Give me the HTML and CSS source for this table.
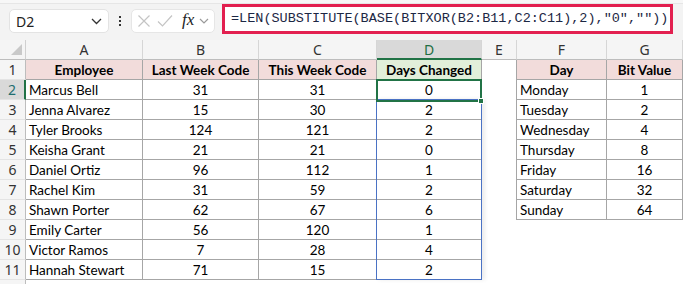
FILE: index.html
```html
<!DOCTYPE html>
<html>
<head>
<meta charset="utf-8">
<link rel="stylesheet" href="styles.css">
</head>
<body>
<div class="app">
  <div class="toolbar">
    <div class="namebox">
      <span class="ref">D2</span>
      <svg class="chev" width="11" height="7" viewBox="0 0 11 7"><polyline points="1,1 5.5,5.5 10,1" fill="none" stroke="#333" stroke-width="1.3"/></svg>
    </div>
    <div class="dots"><i></i><i></i><i></i></div>
    <div class="fnbox">
      <svg class="ico" width="14" height="14" viewBox="0 0 14 14"><path d="M1.5 1.5 L12.5 12.5 M12.5 1.5 L1.5 12.5" stroke="#c4c4c4" stroke-width="1.2" fill="none"/></svg>
      <svg class="ico" width="16" height="14" viewBox="0 0 16 14"><polyline points="1,7.5 5.5,12 15,1.5" fill="none" stroke="#c4c4c4" stroke-width="1.2"/></svg>
      <span class="fx">fx</span>
      <svg class="chev2" width="10" height="6" viewBox="0 0 10 6"><polyline points="1,1 5,5 9,1" fill="none" stroke="#9a9a9a" stroke-width="1.2"/></svg>
    </div>
    <div class="formula">=LEN(SUBSTITUTE(BASE(BITXOR(B2:B11,C2:C11),2),"0",""))</div>
  </div>
  <div class="sheet">
    <div class="corner"><span class="tri"></span></div>
    <div class="ch">A</div><div class="ch">B</div><div class="ch">C</div><div class="ch ch-sel">D</div><div class="ch">E</div><div class="ch">F</div><div class="ch">G</div>

    <div class="rh">1</div>
    <div class="c hd">Employee</div><div class="c hd">Last Week Code</div><div class="c hd">This Week Code</div><div class="c hd hd-g">Days Changed</div><div class="e eb"></div><div class="c hd">Day</div><div class="c hd">Bit Value</div>

    <div class="rh rh-sel">2</div>
    <div class="c t">Marcus Bell</div><div class="c">31</div><div class="c">31</div><div class="c">0</div><div class="e eb"></div><div class="c t">Monday</div><div class="c">1</div>

    <div class="rh">3</div>
    <div class="c t">Jenna Alvarez</div><div class="c">15</div><div class="c">30</div><div class="c">2</div><div class="e eb"></div><div class="c t">Tuesday</div><div class="c">2</div>

    <div class="rh">4</div>
    <div class="c t">Tyler Brooks</div><div class="c">124</div><div class="c">121</div><div class="c">2</div><div class="e eb"></div><div class="c t">Wednesday</div><div class="c">4</div>

    <div class="rh">5</div>
    <div class="c t">Keisha Grant</div><div class="c">21</div><div class="c">21</div><div class="c">0</div><div class="e eb"></div><div class="c t">Thursday</div><div class="c">8</div>

    <div class="rh">6</div>
    <div class="c t">Daniel Ortiz</div><div class="c">96</div><div class="c">112</div><div class="c">1</div><div class="e eb"></div><div class="c t">Friday</div><div class="c">16</div>

    <div class="rh">7</div>
    <div class="c t">Rachel Kim</div><div class="c">31</div><div class="c">59</div><div class="c">2</div><div class="e eb"></div><div class="c t">Saturday</div><div class="c">32</div>

    <div class="rh">8</div>
    <div class="c t">Shawn Porter</div><div class="c">62</div><div class="c">67</div><div class="c">6</div><div class="e eb"></div><div class="c t">Sunday</div><div class="c">64</div>

    <div class="rh">9</div>
    <div class="c t">Emily Carter</div><div class="c">56</div><div class="c">120</div><div class="c">1</div><div class="e"></div><div class="e"></div><div class="e"></div>

    <div class="rh">10</div>
    <div class="c t">Victor Ramos</div><div class="c">7</div><div class="c">28</div><div class="c">4</div><div class="e"></div><div class="e"></div><div class="e"></div>

    <div class="rh">11</div>
    <div class="c t">Hannah Stewart</div><div class="c">71</div><div class="c">15</div><div class="c">2</div><div class="e"></div><div class="e"></div><div class="e"></div>

    <div class="spill"></div>
    <div class="active"><span class="handle"></span></div>
  </div>
  <div class="tail"><div class="rh-tail"></div></div>
</div>
</body>
</html>
```

FILE: styles.css
```css
* { box-sizing: border-box; }
html, body { margin: 0; padding: 0; }
body { width: 683px; height: 284px; overflow: hidden; background: #fff; }

.app { width: 683px; height: 284px; overflow: hidden; }

.toolbar {
  height: 40px;
  background: #f3f3f3;
  border-top: 3px solid #f7f7f7;
  box-shadow: inset 0 1px 0 #e6e6e6;
  display: flex;
  align-items: flex-start;
  position: relative;
}

.namebox {
  margin: 6px 0 0 9px;
  width: 100px;
  height: 24px;
  background: #fff;
  border: 1px solid #e3e3e3;
  border-radius: 5px;
  display: flex;
  align-items: center;
  justify-content: space-between;
  padding: 0 6px 0 6px;
}
.ref { font-family: "Noto Sans", sans-serif; font-size: 14px; color: #222; }
.chev { margin-top: 1px; }

.dots {
  width: 22px;
  height: 24px;
  margin-top: 6px;
  display: flex;
  flex-direction: column;
  align-items: center;
  justify-content: center;
  gap: 2px;
}
.dots i { display: block; width: 2px; height: 2px; background: #333; }

.fnbox {
  margin-top: 6px;
  width: 84px;
  height: 24px;
  background: #fff;
  border: 1px solid #e6e6e6;
  border-radius: 5px;
  display: flex;
  align-items: center;
  padding-left: 5px;
  gap: 6px;
}
.fx {
  font-family: "Liberation Serif", serif;
  font-style: italic;
  font-size: 17px;
  color: #222;
  margin-left: 3px;
  margin-top: -2px;
}
.chev2 { margin-left: -1px; }

.formula {
  margin: 1px 0 0 7px;
  width: 451px;
  height: 30px;
  background: #fff;
  border: 3px solid #e21f4f;
  font-family: "Liberation Mono", monospace;
  font-size: 13.5px;
  line-height: 24px;
  color: #1c2744;
  padding-left: 6px;
  white-space: nowrap;
  overflow: hidden;
}

.sheet {
  position: relative;
  display: grid;
  grid-template-columns: 26px 117px 116px 118px 105px 35px 90px 76px;
  grid-template-rows: repeat(12, 20px);
  font-family: "Lato", sans-serif;
  font-size: 13.5px;
  color: #000;
}

.tail { height: 4px; display: flex; }
.rh-tail { width: 26px; height: 4px; background: #f5f5f5; border-right: 1px solid #bdbdbd; }

.corner {
  background: #f5f5f5;
  border-right: 1px solid #d0d0d0;
  border-bottom: 1px solid #bdbdbd;
  position: relative;
}
.tri {
  position: absolute;
  right: 3px;
  bottom: 4px;
  width: 0; height: 0;
  border-left: 11px solid transparent;
  border-bottom: 11px solid #c9c9c9;
}

.ch {
  background: #f5f5f5;
  border-right: 1px solid #d6d6d6;
  border-bottom: 1px solid #bdbdbd;
  display: flex;
  align-items: center;
  justify-content: center;
  font-family: "Noto Sans", sans-serif;
  font-size: 14px;
  color: #333;
}
.ch-sel {
  background: #d9d9d9;
  color: #1f6e43;
  border-bottom: 2px solid #217346;
}

.rh {
  background: #f5f5f5;
  border-right: 1px solid #bdbdbd;
  border-bottom: 1px solid #e4e4e4;
  display: flex;
  align-items: center;
  justify-content: center;
  font-family: "Noto Sans", sans-serif;
  font-size: 14px;
  color: #333;
}
.rh-sel {
  background: #d9d9d9;
  color: #1f6e70;
  border-right: 2px solid #217346;
}

.c {
  border-right: 1px solid #a6a6a6;
  border-bottom: 1px solid #a6a6a6;
  display: flex;
  align-items: center;
  justify-content: center;
  white-space: nowrap;
  overflow: hidden;
  padding-top: 1px;
}
.c.t { justify-content: flex-start; padding-left: 3px; }
.hd { background: #f2dcdb; font-weight: 700; }
.hd-g { background: #e2efda; }

.eb { border-right: 1px solid #a6a6a6; }

.spill {
  position: absolute;
  left: 376px;
  top: 59px;
  width: 106px;
  height: 181px;
  border: 1px solid #4a72c4;
  box-shadow: 3px 0 4px rgba(0, 0, 0, 0.08);
  pointer-events: none;
}
.active {
  position: absolute;
  left: 376px;
  top: 39px;
  width: 106px;
  height: 23px;
  border: 2px solid #217346;
  pointer-events: none;
}
.handle {
  position: absolute;
  right: -4px;
  bottom: -4px;
  width: 6px;
  height: 6px;
  background: #217346;
  border: 1px solid #fff;
}
```
